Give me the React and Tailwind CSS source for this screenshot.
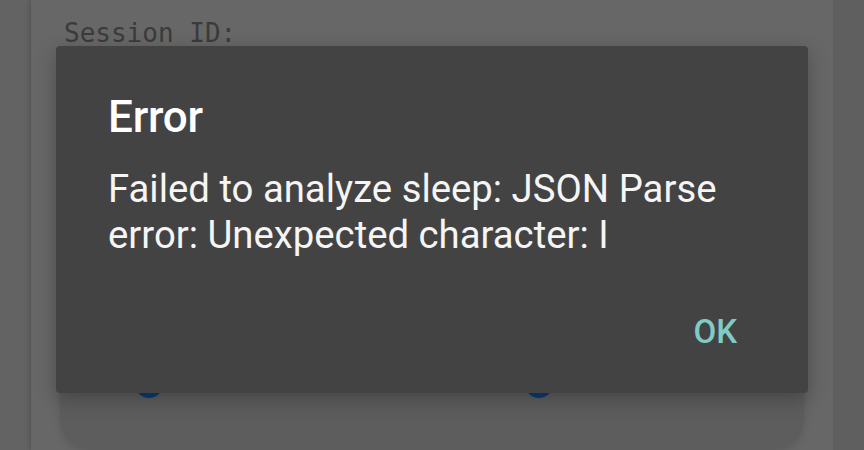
export default function App() {
  return (
    <div className="relative w-[864px] h-[450px] overflow-hidden bg-[#646464] flex" style={{ fontFamily: "Roboto, 'Noto Sans', sans-serif" }}>
      <div className="w-[31px] shrink-0 bg-[#636363]" />
      <div className="flex-1 bg-[#676767] flex flex-col shadow-[0_0_6px_rgba(0,0,0,0.25)]">
        <div className="pl-[33px] pt-[16px] text-[26px] leading-[34px] text-[#3b3b3b]" style={{ fontFamily: "'DejaVu Sans Mono', monospace" }}>
          Session ID:
        </div>
        <div className="mt-[60px] mx-[29px] h-[340px] shrink-0 rounded-[30px] bg-gradient-to-b from-[#565857] to-[#5d5d5d] shadow-[0_2px_8px_rgba(0,0,0,0.12)] flex items-end px-[75px] pb-[52px]">
          <div className="w-[28px] h-[28px] rounded-full bg-[#0a3a72]" />
          <div className="ml-[362px] w-[28px] h-[28px] rounded-full bg-[#0a3a72]" />
        </div>
      </div>
      <div className="w-[31px] shrink-0 bg-[#5f5f5f]" />

      <div className="absolute left-[56px] top-[46px] w-[752px] h-[347px] rounded-[4px] bg-[#434343] shadow-[0_6px_20px_rgba(0,0,0,0.25)] flex flex-col pl-[52px] pr-[52px]">
        <div className="mt-[44px] text-[44px] leading-[54px] font-medium text-white tracking-[-0.2px]">Error</div>
        <div className="mt-[22px] text-[38.3px] leading-[46px] text-[#f5f5f5]">
          Failed to analyze sleep: JSON Parse error: Unexpected character: I
        </div>
        <div className="flex-1" />
        <div className="flex justify-end pb-[41px] pr-[19px]">
          <div className="text-[33px] leading-[40px] font-medium text-[#80cbc4]">OK</div>
        </div>
      </div>
    </div>
  );
}
